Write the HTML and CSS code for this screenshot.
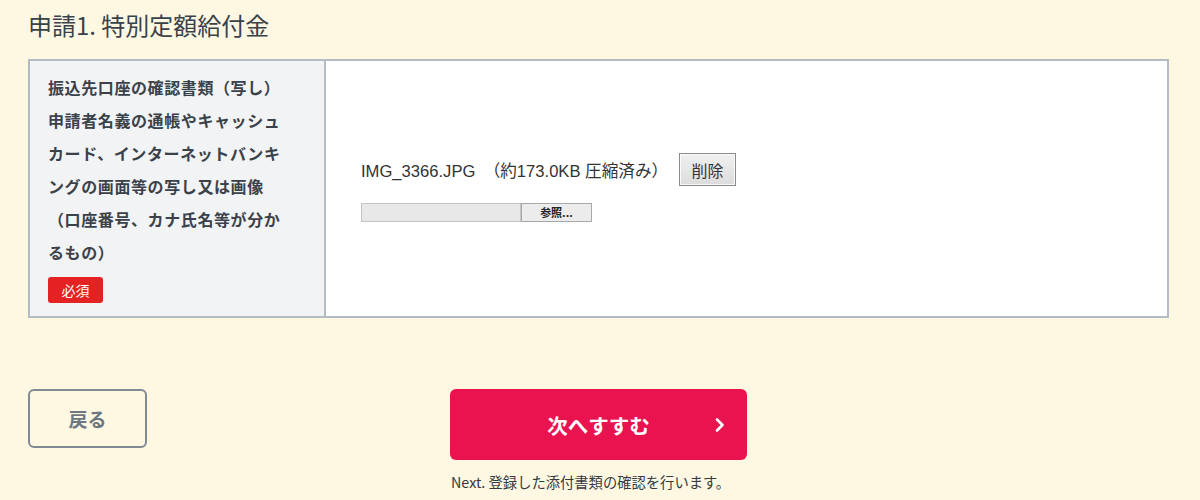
FILE: index.html
```html
<!DOCTYPE html>
<html lang="ja">
<head>
<meta charset="utf-8">
<link rel="stylesheet" href="styles.css">
</head>
<body>
<div class="page">
  <h1 class="title">申請1. 特別定額給付金</h1>
  <div class="form-table">
    <div class="label-cell">
      <p class="label-text">振込先口座の確認書類（写し）申請者名義の通帳やキャッシュカード、インターネットバンキングの画面等の写し又は画像（口座番号、カナ氏名等が分かるもの）</p>
      <span class="required">必須</span>
    </div>
    <div class="value-cell">
      <div class="file-row">
        <span class="file-name">IMG_3366.JPG　（約173.0KB 圧縮済み）</span>
        <button class="delete-btn" type="button">削除</button>
      </div>
      <div class="file-input">
        <span class="file-field"></span>
        <span class="file-browse">参照...</span>
      </div>
    </div>
  </div>
  <div class="actions">
    <button class="back-btn" type="button">戻る</button>
    <div class="next-wrap">
      <button class="next-btn" type="button">
        <span class="next-label">次へすすむ</span>
        <svg class="chevron" width="10" height="16" viewBox="0 0 10 16"><path d="M2 2.5 L7.5 8 L2 13.5" fill="none" stroke="#fff" stroke-width="2.6" stroke-linecap="round" stroke-linejoin="round"/></svg>
      </button>
      <p class="next-note">Next. 登録した添付書類の確認を行います。</p>
    </div>
    <div></div>
  </div>
</div>
</body>
</html>
```

FILE: styles.css
```css
* { box-sizing: border-box; }
html, body {
  margin: 0;
  padding: 0;
  background: #fef8e3;
  font-family: "Noto Sans CJK JP", "Noto Sans", sans-serif;
  color: #333a40;
}
.page {
  width: 1141px;
  margin-left: 28px;
  height: 500px;
  overflow: hidden;
}
.title {
  margin: 0;
  padding-top: 8px;
  height: 59px;
  font-size: 24px;
  font-weight: 400;
  line-height: 34px;
  color: #39424a;
}
.form-table {
  display: flex;
  height: 259px;
  border: 2px solid #b3bcc3;
  background: #fff;
}
.label-cell {
  width: 296px;
  flex: none;
  background: #f1f3f5;
  border-right: 2px solid #b3bcc3;
  padding: 10px 36px 0 18px;
}
.label-text {
  margin: 0;
  font-size: 16px;
  font-weight: 700;
  line-height: 33px;
  letter-spacing: 0.6px;
  color: #3a4149;
  width: 240px;
}
.required {
  display: inline-block;
  margin-top: 8px;
  width: 55px;
  height: 26px;
  line-height: 26px;
  text-align: center;
  background: #e52222;
  color: #fff;
  font-size: 14px;
  border-radius: 3px;
}
.value-cell {
  flex: 1;
  display: flex;
  flex-direction: column;
  justify-content: center;
  padding-left: 35px;
  padding-bottom: 2px;
}
.file-row {
  display: flex;
  align-items: center;
  gap: 11px;
}
.file-name {
  font-family: "Liberation Sans", "Noto Sans CJK JP", sans-serif;
  font-size: 16.6px;
  color: #333;
}
.delete-btn {
  width: 57px;
  height: 33px;
  font-family: "Noto Sans CJK JP", sans-serif;
  font-size: 16px;
  color: #333;
  background: linear-gradient(#f0f0f0, #dcdcdc);
  border: 1px solid #8a8a8a;
  box-shadow: inset 0 0 0 1px #fafafa;
  padding: 0;
}
.file-input {
  display: flex;
  margin-top: 17px;
  height: 19px;
}
.file-field {
  width: 160px;
  background: #e8e8e8;
  border: 1px solid #c4c4c4;
}
.file-browse {
  width: 71px;
  background: #ececec;
  border: 1px solid #a8a8a8;
  font-size: 11px;
  font-weight: 700;
  line-height: 16px;
  text-align: center;
  color: #222;
}
.actions {
  display: grid;
  grid-template-columns: 1fr auto 1fr;
  align-items: start;
  margin-top: 71px;
}
.back-btn {
  width: 119px;
  height: 59px;
  background: transparent;
  border: 2px solid #7f8a94;
  border-radius: 6px;
  font-family: "Noto Sans CJK JP", sans-serif;
  font-size: 19px;
  font-weight: 700;
  color: #6c7781;
  padding: 0;
}
.next-wrap {
  display: flex;
  flex-direction: column;
}
.next-btn {
  position: relative;
  width: 297px;
  height: 71px;
  background: #e8134f;
  border: none;
  border-radius: 6px;
  font-family: "Noto Sans CJK JP", sans-serif;
  font-size: 20.5px;
  font-weight: 700;
  color: #fff;
  padding: 0;
}
.chevron {
  position: absolute;
  right: 22px;
  top: 28px;
}
.next-note {
  margin: 12px 0 0 1px;
  font-size: 14.3px;
  line-height: 20px;
  color: #333a40;
}
```
